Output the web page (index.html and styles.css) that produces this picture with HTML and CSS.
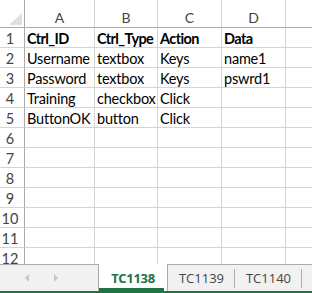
FILE: index.html
```html
<!DOCTYPE html>
<html>
<head>
<meta charset="utf-8">
<link rel="stylesheet" href="styles.css">
</head>
<body>
<div class="app">
  <div class="sheet">
    <div class="grid">
      <div class="corner"><span class="tri"></span></div>
      <div class="ch">A</div><div class="ch">B</div><div class="ch">C</div><div class="ch">D</div><div class="ch last"></div>

      <div class="rh">1</div><div class="c b">Ctrl_ID</div><div class="c b">Ctrl_Type</div><div class="c b">Action</div><div class="c b">Data</div><div class="c"></div>
      <div class="rh">2</div><div class="c">Username</div><div class="c">textbox</div><div class="c">Keys</div><div class="c">name1</div><div class="c"></div>
      <div class="rh">3</div><div class="c">Password</div><div class="c">textbox</div><div class="c">Keys</div><div class="c">pswrd1</div><div class="c"></div>
      <div class="rh">4</div><div class="c">Training</div><div class="c">checkbox</div><div class="c">Click</div><div class="c"></div><div class="c"></div>
      <div class="rh">5</div><div class="c">ButtonOK</div><div class="c">button</div><div class="c">Click</div><div class="c"></div><div class="c"></div>
      <div class="rh">6</div><div class="c"></div><div class="c"></div><div class="c"></div><div class="c"></div><div class="c"></div>
      <div class="rh">7</div><div class="c"></div><div class="c"></div><div class="c"></div><div class="c"></div><div class="c"></div>
      <div class="rh">8</div><div class="c"></div><div class="c"></div><div class="c"></div><div class="c"></div><div class="c"></div>
      <div class="rh">9</div><div class="c"></div><div class="c"></div><div class="c"></div><div class="c"></div><div class="c"></div>
      <div class="rh">10</div><div class="c"></div><div class="c"></div><div class="c"></div><div class="c"></div><div class="c"></div>
      <div class="rh">11</div><div class="c"></div><div class="c"></div><div class="c"></div><div class="c"></div><div class="c"></div>
      <div class="rh">12</div><div class="c"></div><div class="c"></div><div class="c"></div><div class="c"></div><div class="c"></div>
    </div>
  </div>
  <div class="tabbar">
    <div class="nav">
      <span class="arrow left"></span>
      <span class="arrow right"></span>
    </div>
    <div class="tab active"><span>TC1138</span></div>
    <div class="tab"><span>TC1139</span></div>
    <div class="tab"><span>TC1140</span></div>
    <div class="rest"></div>
  </div>
</div>
</body>
</html>
```

FILE: styles.css
```css
* { box-sizing: border-box; }
html, body { margin: 0; padding: 0; background: #fff; }
.app {
  width: 312px;
  height: 293px;
  display: flex;
  flex-direction: column;
  overflow: hidden;
  font-family: Lato, "Liberation Sans", sans-serif;
}
.sheet {
  height: 264px;
  overflow: hidden;
  flex: none;
}
.grid {
  display: grid;
  grid-template-columns: 25px 70px 63px 64px 64px 40px;
  grid-template-rows: 28px repeat(12, 20px);
}
.corner {
  position: relative;
  border-right: 1px solid #ababab;
  border-bottom: 1px solid #ababab;
}
.tri {
  position: absolute;
  right: 2px;
  bottom: 2px;
  width: 0;
  height: 0;
  border-left: 13px solid transparent;
  border-bottom: 12px solid #dfdfdf;
}
.ch {
  border-right: 1px solid #d4d4d4;
  border-bottom: 1px solid #ababab;
  color: #444;
  font-size: 14px;
  text-align: center;
  line-height: 1;
  padding-top: 11px;
}
.ch.last { border-right: none; }
.rh {
  border-right: 1px solid #ababab;
  border-bottom: 1px solid #d4d4d4;
  color: #444;
  font-size: 14.5px;
  text-align: center;
  padding-right: 4px;
  line-height: 1;
  padding-top: 4px;
}
.c {
  border-right: 1px solid #d4d4d4;
  border-bottom: 1px solid #d4d4d4;
  color: #000;
  font-size: 14.5px;
  line-height: 1;
  padding-top: 4px;
  padding-left: 2px;
  white-space: nowrap;
  overflow: visible;
  letter-spacing: -0.2px;
}
.c.b { font-weight: bold; letter-spacing: -0.6px; }

.tabbar {
  height: 29px;
  flex: none;
  display: flex;
  background: #f1f1f1;
  border-bottom: 2px solid #217346;
  font-family: "Open Sans", "Noto Sans", sans-serif;
  font-size: 13px;
}
.nav {
  width: 99px;
  border-top: 1px solid #ababab;
  border-right: 1px solid #ababab;
  display: flex;
  align-items: center;
  padding-left: 25px;
  gap: 25px;
}
.arrow {
  width: 0;
  height: 0;
  border-top: 4px solid transparent;
  border-bottom: 4px solid transparent;
}
.arrow.left { border-right: 4px solid #c6c6c6; }
.arrow.right { border-left: 4px solid #c6c6c6; }
.tab {
  width: 67px;
  border-top: 1px solid #ababab;
  position: relative;
  display: flex;
  justify-content: center;
  padding-top: 4px;
  color: #444;
}
.tab + .tab::after {
  content: "";
  position: absolute;
  right: 0;
  top: 4px;
  height: 19px;
  border-right: 1px solid #ababab;
}
.tab.active {
  width: 69px;
  background: #fff;
  border-top: none;
  border-right: 1px solid #ababab;
  color: #217346;
  font-weight: bold;
  padding-top: 5px;
  letter-spacing: -0.3px;
}
.tab.active::before {
  content: "";
  position: absolute;
  left: 0;
  right: 3px;
  bottom: 0;
  height: 3px;
  background: #217346;
}
.rest {
  flex: 1;
  border-top: 1px solid #ababab;
}
```
